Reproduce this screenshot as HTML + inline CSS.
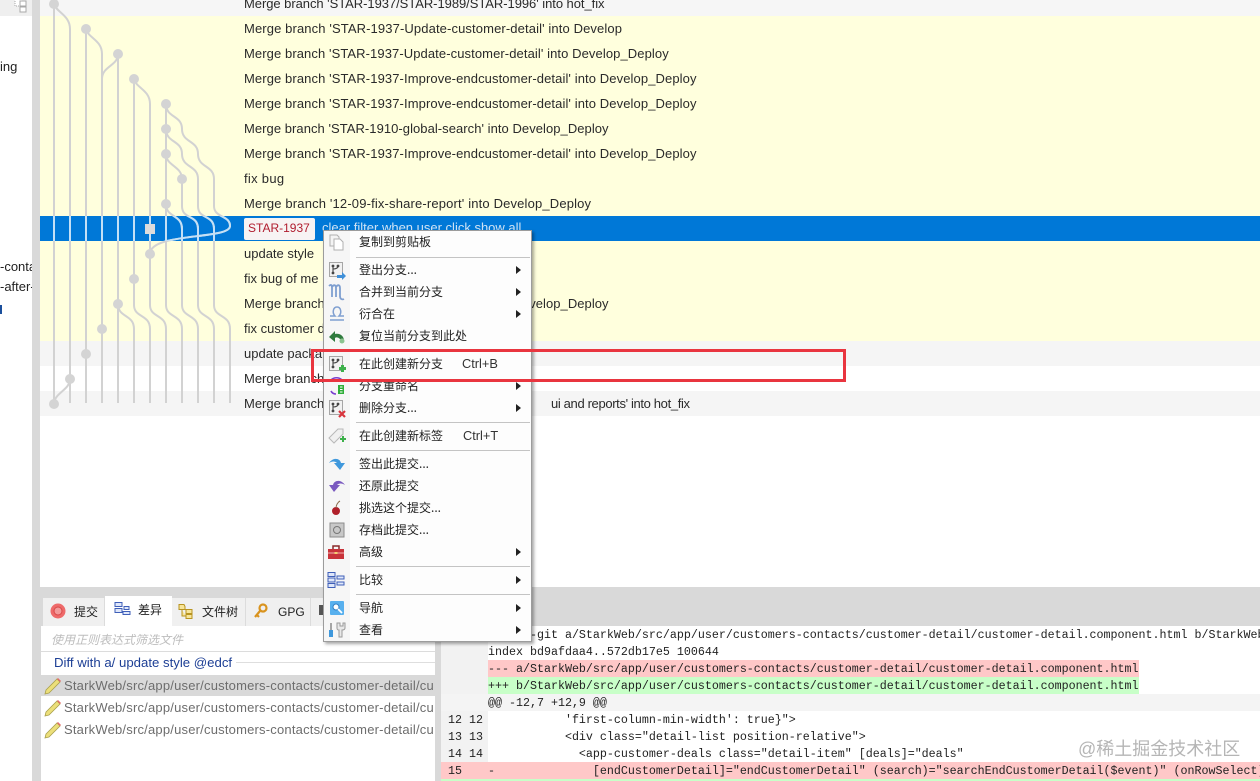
<!DOCTYPE html>
<html><head><meta charset="utf-8"><style>
html,body{margin:0;padding:0;background:#fff}
#p{position:relative;width:1260px;height:781px;overflow:hidden;background:#fff;font-family:"Liberation Sans","Noto Sans CJK SC",sans-serif;color:#222;font-size:13px}
.a{position:absolute}
.r{position:absolute;left:244px;white-space:pre;font-size:13px;line-height:25px;height:25px;color:#2a2a2a;transform:translateY(-1px)}
.m{position:absolute;left:359px;font-size:12px;line-height:18px;height:18px;color:#222;white-space:pre;font-family:"Noto Sans CJK SC","Liberation Sans",sans-serif}
.k{position:absolute;font-size:12.8px;line-height:18px;color:#333;white-space:pre}
.s{position:absolute;left:356px;width:174px;height:1px;background:#c4c4c4}
.t{position:absolute;width:0;height:0;left:516px;border-left:5px solid #222;border-top:4px solid transparent;border-bottom:4px solid transparent}
.d{position:absolute;left:488px;white-space:pre;font-family:"Liberation Mono",monospace;font-size:11.67px;line-height:17px;height:17px;color:#222}
.n{position:absolute;white-space:pre;font-family:"Liberation Mono",monospace;font-size:11.67px;line-height:17px;color:#222}
.f{position:absolute;left:64px;width:369px;overflow:hidden;white-space:pre;font-size:13px;letter-spacing:.2px;line-height:18px;color:#6d6d6d}
.tab{position:absolute;top:598px;height:28px;background:#f0f0f0;border-right:1px solid #dcdcdc;box-sizing:border-box}
.tt{position:absolute;font-size:12px;line-height:16px;color:#222;white-space:pre;font-family:"Noto Sans CJK SC","Liberation Sans",sans-serif}
</style></head><body><div id="p">

<!-- left strip -->
<div class="a" style="left:0;top:0;width:32px;height:16px;background:#efefef"></div>
<div class="a" style="left:32px;top:0;width:8px;height:781px;background:#d9d9d9"></div>
<div class="a" style="left:0;top:59px;font-size:13px;line-height:16px;width:17px;overflow:hidden;white-space:pre">ing</div>
<div class="a" style="left:0;top:259px;font-size:13px;line-height:16px;width:32px;overflow:hidden;white-space:pre">-conta</div>
<div class="a" style="left:0;top:279px;font-size:13px;line-height:16px;width:32px;overflow:hidden;white-space:pre">-after-</div>
<div class="a" style="left:0;top:305px;width:2px;height:9px;background:#1b4f9c"></div>

<!-- rows -->
<div class="a" style="left:40px;top:0;width:1220px;height:16px;background:#f6f6f6"></div>
<div class="a" style="left:40px;top:16px;width:1220px;height:325px;background:#ffffdd"></div>
<div class="a" style="left:40px;top:216px;width:1220px;height:25px;background:#0078d7"></div>
<div class="a" style="left:40px;top:341px;width:1220px;height:25px;background:#f5f5f5"></div>
<div class="a" style="left:40px;top:391px;width:1220px;height:25px;background:#f5f5f5"></div>
<div class="a" style="left:40px;top:416px;width:1220px;height:171px;background:#fff"></div>

<div class="r" style="top:-8px;letter-spacing:-.05px">Merge branch 'STAR-1937/STAR-1989/STAR-1996' into hot_fix</div>
<div class="r" style="top:17px;letter-spacing:.117px">Merge branch 'STAR-1937-Update-customer-detail' into Develop</div>
<div class="r" style="top:42px;letter-spacing:.09px">Merge branch 'STAR-1937-Update-customer-detail' into Develop_Deploy</div>
<div class="r" style="top:67px;letter-spacing:.1px">Merge branch 'STAR-1937-Improve-endcustomer-detail' into Develop_Deploy</div>
<div class="r" style="top:92px;letter-spacing:.1px">Merge branch 'STAR-1937-Improve-endcustomer-detail' into Develop_Deploy</div>
<div class="r" style="top:117px;letter-spacing:.05px">Merge branch 'STAR-1910-global-search' into Develop_Deploy</div>
<div class="r" style="top:142px;letter-spacing:.1px">Merge branch 'STAR-1937-Improve-endcustomer-detail' into Develop_Deploy</div>
<div class="r" style="top:167px;letter-spacing:.3px">fix bug</div>
<div class="r" style="top:192px;letter-spacing:.16px">Merge branch '12-09-fix-share-report' into Develop_Deploy</div>
<div class="a" style="left:244px;top:218px;width:71px;height:22px;background:#f7f3f3;border-radius:2px"></div>
<div class="a" style="left:248px;top:219px;font-size:12px;line-height:18px;color:#b01c2e;white-space:pre">STAR-1937</div>
<div class="r" style="left:322px;top:216px;color:#cfe3f5">clear filter when user click show all</div>
<div class="r" style="top:242px">update style</div>
<div class="r" style="top:267px">fix bug of me</div>
<div class="r" style="top:292px;letter-spacing:.05px">Merge branch 'STAR-1910-global-search' into Develop_Deploy</div>
<div class="r" style="top:317px">fix customer d</div>
<div class="r" style="top:342px">update packa</div>
<div class="r" style="top:367px">Merge branch</div>
<div class="r" style="top:392px">Merge branch</div>
<div class="r" style="left:551px;top:392px;letter-spacing:-.35px">ui and reports' into hot_fix</div>

<!-- graph -->
<svg class="a" style="left:0;top:0" width="260" height="420" viewBox="0 0 260 420" fill="none">
<defs>
<g id="g">
<path d="M54 0V403"/>
<path d="M54 4C56 12 70 15 70 29V403"/>
<path d="M86 29V403"/>
<path d="M86 29C88 38 102 40 102 54V403"/>
<path d="M118 54V403"/>
<path d="M118 54C118 66 102 66 102 79"/>
<path d="M134 79V305C134 318 150 314 150 329V403"/>
<path d="M134 79C136 88 150 90 150 104V305C150 318 166 314 166 329V403"/>
<path d="M166 104V305C166 318 182 314 182 329V403"/>
<path d="M166 104C166 118 182 115 182 129C182 143 198 140 198 154C198 168 214 165 214 179V206C214 218 230 215 230 226C230 240 150 232 150 254"/>
<path d="M166 129C166 143 182 140 182 154C182 168 198 165 198 179V206C198 220 214 214 214 229V305C214 318 230 314 230 329V403"/>
<path d="M166 154C166 166 182 166 182 179V206C182 220 198 214 198 229V305C198 318 214 314 214 329V403"/>
<path d="M166 204C166 218 182 214 182 229V305C182 318 198 314 198 329V403"/>
<path d="M118 304C118 318 134 314 134 329V403"/>
<path d="M70 379C70 390 54 393 54 404"/>
</g>
<clipPath id="c"><rect x="40" y="216" width="220" height="25"/></clipPath>
</defs>
<use href="#g" stroke="#d2d2d2" stroke-width="2"/>
<g clip-path="url(#c)"><use href="#g" stroke="#c4e0f6" stroke-width="2"/></g>
<g fill="#d4d4d4">
<circle cx="54" cy="4" r="5"/><circle cx="86" cy="29" r="5"/><circle cx="118" cy="54" r="5"/><circle cx="134" cy="79" r="5"/>
<circle cx="166" cy="104" r="5"/><circle cx="166" cy="129" r="5"/><circle cx="166" cy="154" r="5"/><circle cx="182" cy="179" r="5"/><circle cx="166" cy="204" r="5"/>
<circle cx="150" cy="254" r="5"/><circle cx="134" cy="279" r="5"/><circle cx="118" cy="304" r="5"/><circle cx="102" cy="329" r="5"/><circle cx="86" cy="354" r="5"/><circle cx="70" cy="379" r="5"/><circle cx="54" cy="404" r="5"/>
<rect x="145" y="224" width="10" height="10" fill="#dcdcdc"/>
</g>
<g stroke="#a8a8a8" fill="#fff" stroke-width="1"><rect x="15" y="-2" width="7" height="8" stroke-dasharray="1 1"/><rect x="20" y="1" width="6" height="5"/><rect x="20" y="7" width="6" height="5"/></g>
</svg>

<!-- bottom area -->
<div class="a" style="left:40px;top:587px;width:1220px;height:194px;background:#d9d9d9"></div>
<div class="a" style="left:41px;top:626px;width:394px;height:155px;background:#fff"></div>
<div class="tab" style="left:43px;width:62px"></div>
<div class="a" style="left:105px;top:596px;width:67px;height:31px;background:#fff"></div>
<div class="tab" style="left:172px;width:74px"></div>
<div class="tab" style="left:246px;width:65px"></div>
<div class="tab" style="left:311px;width:20px;border:0"></div>
<div class="tt" style="left:74px;top:604px">提交</div>
<div class="tt" style="left:138px;top:602px">差异</div>
<div class="tt" style="left:202px;top:604px">文件树</div>
<div class="a" style="left:278px;top:604px;font-size:12px;line-height:16px;color:#222">GPG</div>

<div class="a" style="left:51px;top:632px;font-size:12px;line-height:16px;font-style:italic;color:#bdbdbd;white-space:pre;font-family:'Noto Sans CJK SC',sans-serif">使用正则表达式筛选文件</div>
<div class="a" style="left:41px;top:651px;width:394px;height:1px;background:#dcdcdc"></div>
<div class="a" style="left:54px;top:655px;font-size:13.2px;line-height:16px;color:#1d3f95;white-space:pre">Diff with a/ update style @edcf</div>
<div class="a" style="left:236px;top:662px;width:199px;height:1px;background:#dedede"></div>
<div class="a" style="left:41px;top:675px;width:394px;height:21px;background:#d9d9d9"></div>
<div class="f" style="top:677px">StarkWeb/src/app/user/customers-contacts/customer-detail/customer-detail</div>
<div class="f" style="top:699px">StarkWeb/src/app/user/customers-contacts/customer-detail/customer-detail</div>
<div class="f" style="top:721px">StarkWeb/src/app/user/customers-contacts/customer-detail/customer-detail</div>

<!-- diff -->
<div class="a" style="left:441px;top:626px;width:819px;height:155px;background:#fff;overflow:hidden"></div>
<div class="a" style="left:441px;top:626px;width:47px;height:136px;background:#f2f2f2"></div>
<div class="a" style="left:488px;top:660px;width:651px;height:17px;background:#ffc8c8"></div>
<div class="a" style="left:488px;top:677px;width:651px;height:17px;background:#c8ffc8"></div>
<div class="a" style="left:441px;top:694px;width:819px;height:17px;background:#f4f4f4"></div>
<div class="a" style="left:441px;top:762px;width:819px;height:17px;background:#ffc8c8"></div>
<div class="a" style="left:441px;top:779px;width:819px;height:2px;background:#c8ffc8"></div>
<div class="d" style="top:627px">diff --git a/StarkWeb/src/app/user/customers-contacts/customer-detail/customer-detail.component.html b/StarkWeb/src/app</div>
<div class="d" style="top:644px">index bd9afdaa4..572db17e5 100644</div>
<div class="d" style="top:661px">--- a/StarkWeb/src/app/user/customers-contacts/customer-detail/customer-detail.component.html</div>
<div class="d" style="top:678px">+++ b/StarkWeb/src/app/user/customers-contacts/customer-detail/customer-detail.component.html</div>
<div class="d" style="top:695px">@@ -12,7 +12,9 @@</div>
<div class="d" style="top:712px">           'first-column-min-width': true}"&gt;</div>
<div class="d" style="top:729px">           &lt;div class="detail-list position-relative"&gt;</div>
<div class="d" style="top:746px">             &lt;app-customer-deals class="detail-item" [deals]="deals"</div>
<div class="d" style="top:763px;width:772px;overflow:hidden">-              [endCustomerDetail]="endCustomerDetail" (search)="searchEndCustomerDetail($event)" (onRowSelect)="onRowSelect($event)"</div>
<div class="n" style="left:448px;top:712px">12 12</div>
<div class="n" style="left:448px;top:729px">13 13</div>
<div class="n" style="left:448px;top:746px">14 14</div>
<div class="n" style="left:448px;top:763px">15</div>

<!-- watermark -->
<div class="a" style="left:1078px;top:737px;font-size:18px;line-height:24px;color:rgba(120,120,120,.55);white-space:pre;font-family:'Liberation Sans','Noto Sans CJK SC',sans-serif">@稀土掘金技术社区</div>

<!-- bottom tab icons -->
<svg class="a" style="left:0;top:590px" width="340" height="160" viewBox="0 590 340 160" fill="none">
<circle cx="58" cy="611" r="7.5" fill="#ee6a6a"/><circle cx="58" cy="611" r="4" fill="#f29a9a" stroke="#d84848"/>
<g stroke="#3f5fb8" fill="#dfe7fa"><rect x="115" y="602.5" width="7" height="4"/><rect x="115" y="608.5" width="7" height="4"/><rect x="124" y="606.5" width="5" height="3"/><rect x="123" y="611.5" width="7" height="3"/></g>
<g stroke="#b89420" fill="#f7e59a"><path d="M179 604.5h5l1 2v3h-6z"/><path d="M186 609.5h6v4h-6z"/><path d="M186 614.5h6v4h-6z"/><path d="M182 610v6h4"/></g>
<g fill="none" stroke="#d9931e" stroke-width="2.2"><circle cx="263" cy="608" r="3.5"/><path d="M260 611l-5 6M257 615l2 2"/></g>
<rect x="319" y="605" width="5" height="10" fill="#555"/>
<g id="pen"><path d="M46 690l11-11 3 3-11 11-4 1z" fill="#ecdf7a" stroke="#a9a04c" stroke-width=".8"/><path d="M57 679l1-1 3 3-1 1z" fill="#e46a6a"/></g>
<use href="#pen" y="22"/><use href="#pen" y="44"/>
</svg>

<!-- menu -->
<div class="a" style="left:323px;top:230px;width:207px;height:410px;background:#fdfdfd;border:1px solid #9c9c9c;box-shadow:2px 2px 3px rgba(0,0,0,.35)"></div>
<div class="a" style="left:324px;top:231px;width:26px;height:410px;background:#f6f6f6"></div>

<div class="m" style="top:233px">复制到剪贴板</div>
<div class="s" style="top:257px"></div>
<div class="m" style="top:261px">登出分支...</div><div class="t" style="top:266px"></div>
<div class="m" style="top:283px">合并到当前分支</div><div class="t" style="top:288px"></div>
<div class="m" style="top:305px">衍合在</div><div class="t" style="top:310px"></div>
<div class="m" style="top:327px">复位当前分支到此处</div>
<div class="s" style="top:350px"></div>
<div class="m" style="top:355px">在此创建新分支</div><div class="k" style="left:462px;top:355px">Ctrl+B</div>
<div class="m" style="top:377px">分支重命名</div><div class="t" style="top:382px"></div>
<div class="m" style="top:399px">删除分支...</div><div class="t" style="top:404px"></div>
<div class="s" style="top:422px"></div>
<div class="m" style="top:427px">在此创建新标签</div><div class="k" style="left:463px;top:427px">Ctrl+T</div>
<div class="s" style="top:450px"></div>
<div class="m" style="top:455px">签出此提交...</div>
<div class="m" style="top:477px">还原此提交</div>
<div class="m" style="top:499px">挑选这个提交...</div>
<div class="m" style="top:521px">存档此提交...</div>
<div class="m" style="top:543px">高级</div><div class="t" style="top:548px"></div>
<div class="s" style="top:566px"></div>
<div class="m" style="top:571px">比较</div><div class="t" style="top:576px"></div>
<div class="s" style="top:594px"></div>
<div class="m" style="top:599px">导航</div><div class="t" style="top:604px"></div>
<div class="m" style="top:621px">查看</div><div class="t" style="top:626px"></div>

<!-- menu icons -->
<svg class="a" style="left:0;top:0" width="1260" height="781" viewBox="0 0 1260 781" fill="none">
<defs>
<g id="br"><rect x="-6.5" y="-7.5" width="13" height="14" fill="#f1f1f1" stroke="#a6a6a6"/><path d="M-3-4V3M-3-1C0-1 2-2 2-4" stroke="#444" stroke-width="1.1"/><circle cx="-3" cy="-4" r="1.4" fill="#444"/><circle cx="-3" cy="3" r="1.4" fill="#444"/><circle cx="2" cy="-4" r="1.4" fill="#444"/></g>
</defs>
<g transform="translate(337,242)" stroke="#b0b0b0" fill="#f4f4f4"><path d="M-7-7h7l2 2V4h-9z"/><path d="M-3-3h6l3 3V8h-9z" fill="#fff"/></g>
<g transform="translate(336,270)"><use href="#br"/><path d="M1 5h5V2l4 4-4 4V8H1z" fill="#3f8fd8"/></g>
<g transform="translate(337,292)" stroke="#7f9fd0" stroke-width="1.8"><path d="M-8-6C-6-8-5-7-5-4V5M-5-5C-3-8-1-7-1-4V5M-1-5C1-8 3-7 3-4V4C3 7 5 8 7 7"/></g>
<g transform="translate(337,314)" stroke="#7f9fd0" stroke-width="1.5"><path d="M-7 6H7M-7 2H-2C-5-1-4-7 0-7S5-1 2 2H7"/></g>
<g transform="translate(337,336)"><path d="M-8 1L-2-5V-2C3-3 7 0 7 5L3 3C1 1-1 1-2 2V6z" fill="#2f7a3e"/><circle cx="5" cy="5" r="2.5" fill="#8bc38f"/></g>
<g transform="translate(336,364)"><use href="#br"/><path d="M3 3h2V1h3v2h2v3H8v2H5V6H3z" fill="#3cb04a"/></g>
<g transform="translate(337,386)"><path d="M-6-6C-3-9 2-9 5-6M-6 5C-5 7-3 8-1 8" stroke="#7a3fd0" stroke-width="1.6"/><path d="M1-1h6v9H1z" fill="#2fae3a"/><path d="M3 1h2.500M3 3.500h2.500M3 6h2.500" stroke="#fff"/></g>
<g transform="translate(336,408)"><use href="#br"/><path d="M3 3l6 6M9 3l-6 6" stroke="#d8343c" stroke-width="2.200"/></g>
<g transform="translate(337,436)"><path d="M-8 2L1-7H6V-2L-3 7z" fill="#f0f0f0" stroke="#b8b8b8"/><path d="M3 2h2V0h2v2h2v2H7v2H5V4H3z" fill="#3cb04a"/></g>
<g transform="translate(337,464)"><path d="M-8-1C-4-7 3-6 4-1H8L3 6-3-1H0C-2-3-5-3-8-1z" fill="#3f98dc"/></g>
<g transform="translate(337,486)"><path d="M8-1C4-7-3-6-4-1H-8L-3 6 3-1H0C2-3 5-3 8-1z" fill="#7a5ac0"/></g>
<g transform="translate(336,508)"><circle cx="0" cy="3" r="4" fill="#b0202a"/><path d="M0 0C0-3 2-6 4-7" stroke="#8a6a4a"/></g>
<g transform="translate(337,530)"><rect x="-7" y="-7" width="14" height="14" fill="#c8c8c8" stroke="#8c8c8c"/><circle cx="0" cy="0" r="3.500" stroke="#777"/></g>
<g transform="translate(336,552)"><rect x="-8" y="-3" width="16" height="10" fill="#c8333a"/><path d="M-3-3V-6H3V-3" stroke="#8a2a2a" stroke-width="1.500"/><path d="M-8 1H8" stroke="#f2b0b0"/><rect x="-1.500" y="0" width="3" height="2" fill="#f4d070"/></g>
<g transform="translate(336,580)" stroke="#3f5fb8" fill="#dfe7fa"><rect x="-8" y="-7.500" width="7" height="4"/><rect x="-8" y="-2" width="7" height="4"/><rect x="-8" y="3.500" width="7" height="4"/><rect x="1" y="-4" width="7" height="3"/><rect x="1" y="2" width="7" height="3"/></g>
<g transform="translate(337,608)"><rect x="-7" y="-7" width="14" height="14" rx="1" fill="#58b0ee"/><circle cx="-1" cy="-1" r="3" fill="#fff" stroke="#2f7ec4"/><path d="M1 1l4 4" stroke="#fff" stroke-width="1.800"/></g>
<g transform="translate(337,630)"><path d="M-6-7V0" stroke="#8a8a8a" stroke-width="1.500"/><rect x="-8" y="0" width="4" height="7" fill="#3f98dc"/><path d="M0-7V-2C0 0 1 0 2 0V7H5V0C6 0 8 0 8-2V-7L6-7V-4H3V-7z" fill="#e8e8e8" stroke="#9a9a9a"/></g>
</svg>

<!-- red highlight -->
<div class="a" style="left:311px;top:349px;width:535px;height:33px;box-sizing:border-box;border:3px solid #e9353f"></div>
</div></body></html>
